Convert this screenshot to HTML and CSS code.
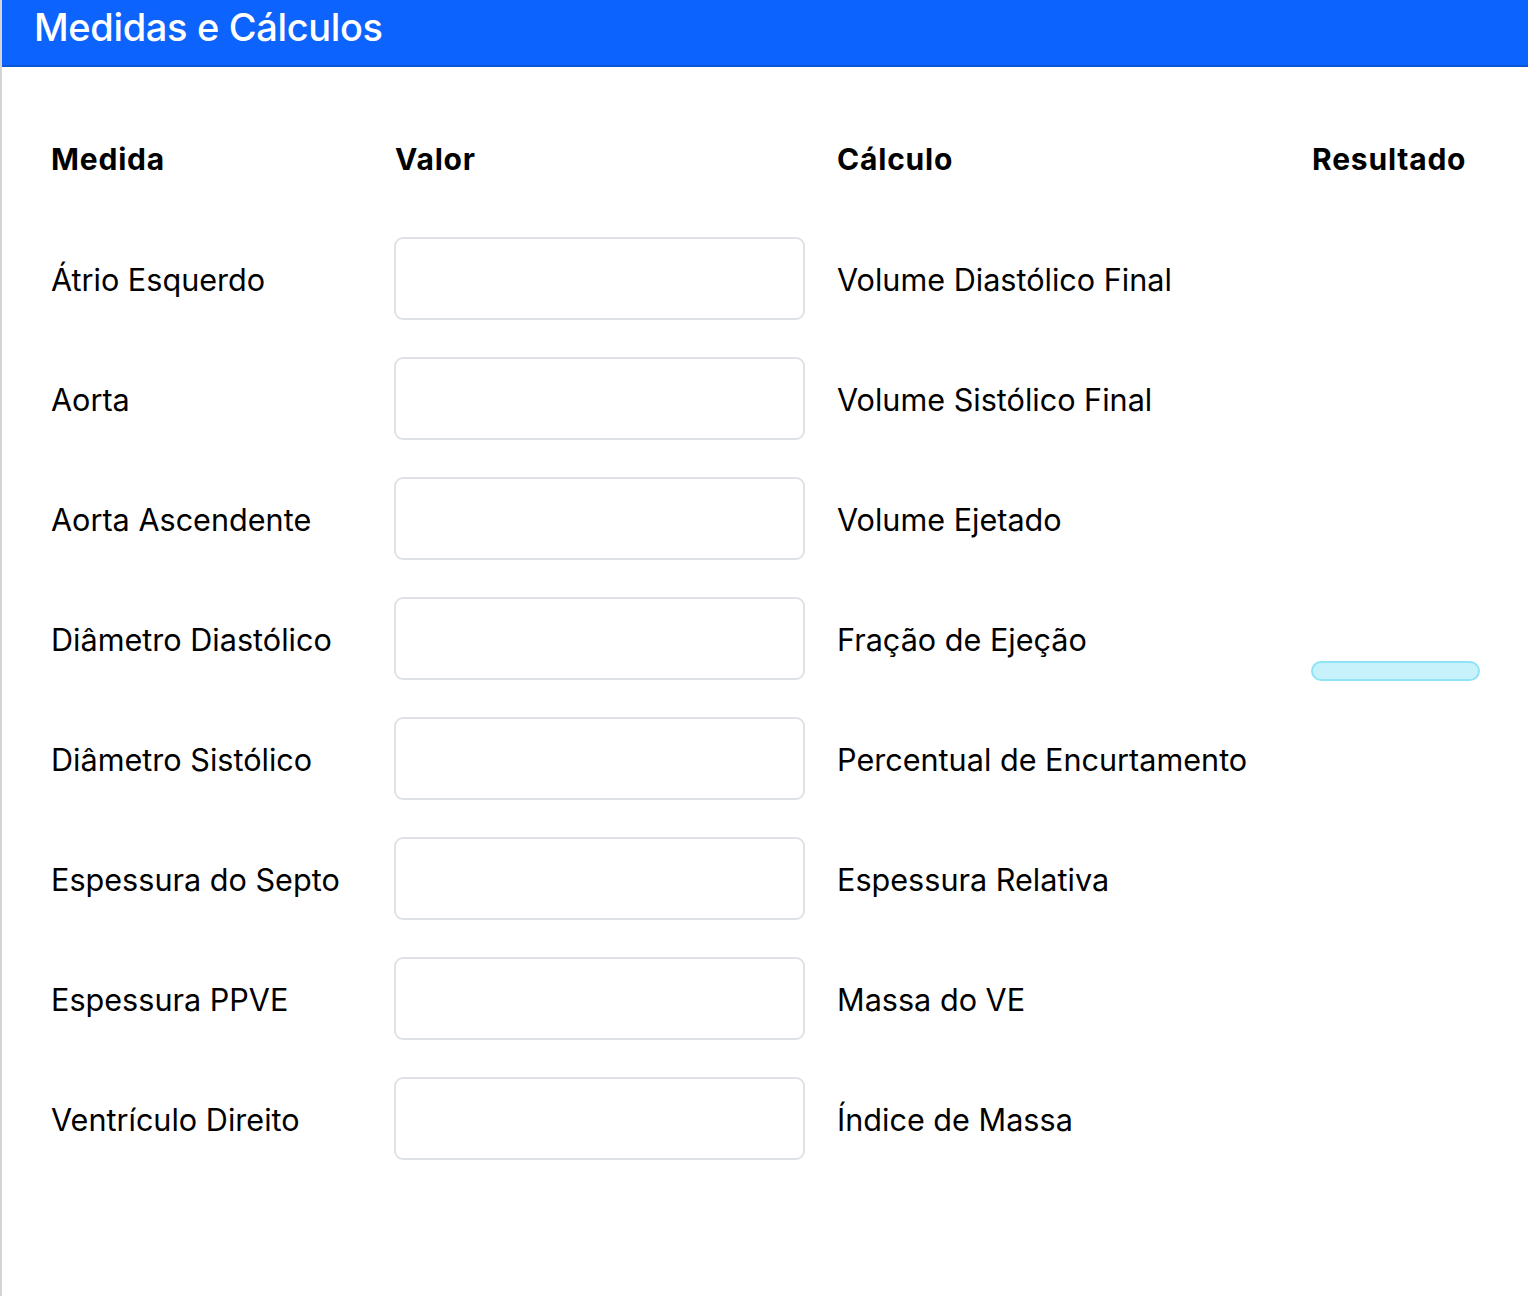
FILE: index.html
```html
<!DOCTYPE html>
<html lang="pt">
<head>
<meta charset="utf-8">
<title>Medidas e Cálculos</title>
<link rel="stylesheet" href="styles.css">
</head>
<body>
<div class="panel">
  <header class="panel-header">
    <h1 class="panel-title">Medidas e Cálculos</h1>
  </header>
  <div class="sheet">
    <div class="th">Medida</div>
    <div class="th">Valor</div>
    <div class="th">Cálculo</div>
    <div class="th">Resultado</div>

    <div class="td">Átrio Esquerdo</div>
    <div class="td"><input class="field" type="text"></div>
    <div class="td">Volume Diastólico Final</div>
    <div class="td"></div>

    <div class="td">Aorta</div>
    <div class="td"><input class="field" type="text"></div>
    <div class="td">Volume Sistólico Final</div>
    <div class="td"></div>

    <div class="td">Aorta Ascendente</div>
    <div class="td"><input class="field" type="text"></div>
    <div class="td">Volume Ejetado</div>
    <div class="td"></div>

    <div class="td">Diâmetro Diastólico</div>
    <div class="td"><input class="field" type="text"></div>
    <div class="td">Fração de Ejeção</div>
    <div class="td td-result"><div class="result-bar"></div></div>

    <div class="td">Diâmetro Sistólico</div>
    <div class="td"><input class="field" type="text"></div>
    <div class="td">Percentual de Encurtamento</div>
    <div class="td"></div>

    <div class="td">Espessura do Septo</div>
    <div class="td"><input class="field" type="text"></div>
    <div class="td">Espessura Relativa</div>
    <div class="td"></div>

    <div class="td">Espessura PPVE</div>
    <div class="td"><input class="field" type="text"></div>
    <div class="td">Massa do VE</div>
    <div class="td"></div>

    <div class="td">Ventrículo Direito</div>
    <div class="td"><input class="field" type="text"></div>
    <div class="td">Índice de Massa</div>
    <div class="td"></div>
  </div>
</div>
</body>
</html>
```
FILE: styles.css
```css
* { box-sizing: border-box; }
html, body {
  margin: 0;
  padding: 0;
  background: #ffffff;
}
body {
  font-family: Inter, "Noto Sans", "Liberation Sans", sans-serif;
  color: #000000;
}
.panel {
  min-height: 1296px;
  border-left: 2px solid #d4d4d4;
}
.panel-header {
  height: 67px;
  background: #0d63fd;
  border-bottom: 2px solid #0a55d6;
  padding: 0 0 0 32px;
  display: flex;
  align-items: center;
}
.panel-title {
  margin: 0 0 12px 0;
  font-size: 38px;
  font-weight: 500;
  color: #ffffff;
  letter-spacing: -0.35px;
}
.sheet {
  display: grid;
  grid-template-columns: 344px 442px 475px 168px;
  grid-auto-rows: 120px;
  padding: 32px 0 0 49px;
}
.th {
  font-size: 30px;
  font-weight: 700;
  letter-spacing: 0.8px;
  display: flex;
  align-items: center;
}
.td {
  font-size: 30.6px;
  font-weight: 400;
  display: flex;
  align-items: center;
}
.field {
  width: 411px;
  height: 83px;
  margin-top: -2px;
  margin-left: -1px;
  border: 2px solid #dee2e6;
  border-radius: 9px;
  background: #ffffff;
  font: inherit;
  padding: 0 16px;
  outline: none;
}
.td-result {
  align-items: flex-end;
  padding-bottom: 18px;
}
.result-bar {
  width: 169px;
  height: 20px;
  margin-left: -1px;
  background: #c8f2fb;
  border: 2px solid #8fe3f7;
  border-radius: 10px;
}
```
